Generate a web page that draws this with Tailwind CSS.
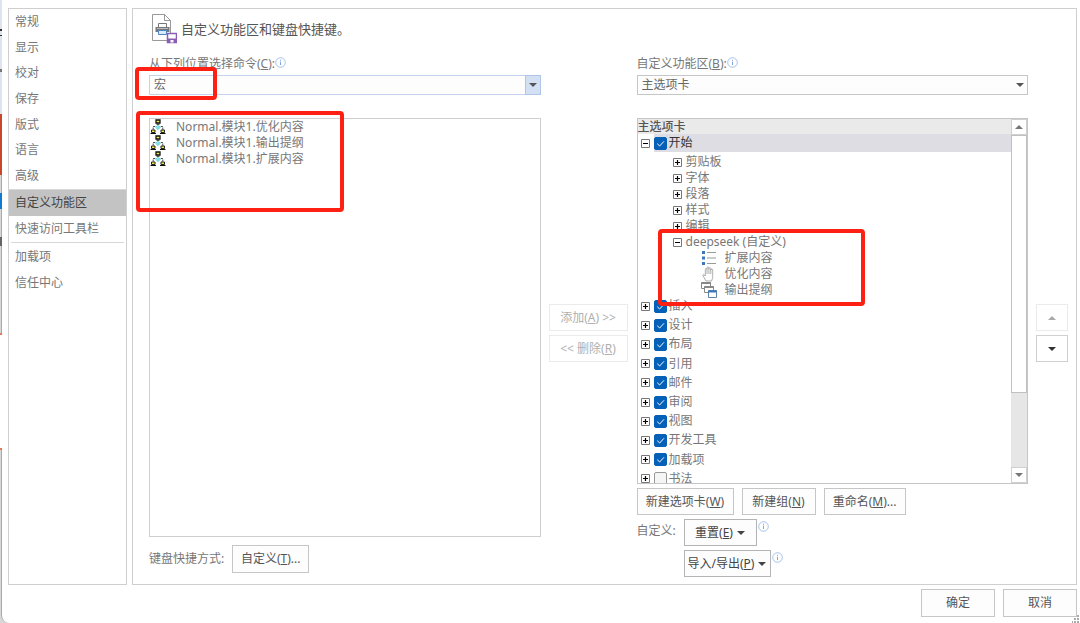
<!DOCTYPE html>
<html lang="zh-CN">
  <head>
    <meta charset="UTF-8" />
    <meta name="viewport" content="width=device-width, initial-scale=1.0" />
    <title>Word 选项</title>
    <script src="https://cdn.jsdelivr.net/npm/@tailwindcss/browser@4"></script>
  </head>
  <body class="relative h-screen overflow-hidden bg-[#d8d8d8] font-['Noto_Sans','Noto_Sans_CJK_SC',sans-serif] text-[12px] leading-4 text-[#777]">
    <!-- Edge of the window behind the dialog -->
    <svg class="absolute left-0 top-0 h-[623px] w-[2px]" viewBox="0 0 2 623" aria-hidden="true">
      <rect width="2" height="114" fill="#dfe3ee" />
      <rect y="29" width="2" height="2" fill="#333" />
      <rect y="35" width="2" height="1" fill="#333" />
      <rect y="69" width="2" height="3" fill="#777" />
      <rect y="114" width="2" height="61" fill="#c8472b" />
      <rect y="193" width="2" height="16" fill="#0f7ad1" />
      <rect y="237" width="2" height="9" fill="#666" />
      <rect y="335" width="2" height="114" fill="#fff" />
      <rect y="333" width="2" height="2" fill="#e8775a" />
      <rect y="448" width="2" height="2" fill="#e8775a" />
    </svg>

    <!-- Symbols shared by the tree and the lists -->
    <svg class="hidden">
      <symbol id="plus" viewBox="0 0 9 9">
        <path d="M.5.5h8v8h-8z" fill="#fff" stroke="#777" />
        <path d="M2 4.5h5M4.5 2v5" stroke="#000" stroke-width="1.2" />
      </symbol>
      <symbol id="minus" viewBox="0 0 9 9">
        <path d="M.5.5h8v8h-8z" fill="#fff" stroke="#777" />
        <path d="M2 4.5h5" stroke="#000" />
      </symbol>
      <symbol id="info" viewBox="0 0 11 11">
        <circle cx="5.5" cy="5.5" r="4.8" fill="#fff" stroke="#9dbbe6" stroke-width=".9" />
        <path d="M5.5 4.7v3.4M5.5 2.7v1.1" stroke="#7fa5dd" />
      </symbol>
      <symbol id="down" viewBox="0 0 8 4"><path d="M0 0h8L4 4z" fill="currentColor" /></symbol>
      <symbol id="up" viewBox="0 0 8 4"><path d="M0 4h8L4 0z" fill="currentColor" /></symbol>
      <symbol id="check" viewBox="0 0 12 12"><path d="M3 6.2l2.2 2.1L9.2 4" fill="none" stroke="#fff" stroke-width=".9" /></symbol>
      <symbol id="macro" viewBox="0 0 16 16">
        <path d="M5.200 7.500h-2v3M10.800 7.500h2v3" fill="none" stroke="#444" stroke-dasharray="2 1" />
        <path d="M6 1h4v3H6z" fill="#f0ea50" stroke="#111" stroke-width="1.300" />
        <path d="M6.500 5.200h3" stroke="#111" />
        <path d="M8 5.900l2.400 2.400L8 10.700 5.600 8.300z" fill="#7fe6ec" stroke="#4aa9b2" stroke-width=".5" />
        <path d="M1.500 11h3.500v2.500H1.500zM11 11h3.500v2.500H11z" fill="#f0ea50" stroke="#222" />
        <path d="M.500 14.500h5.500M10 14.500h5.500" stroke="#111" stroke-width="1.200" />
      </symbol>
    </svg>

    <div class="ml-px flex h-full flex-col rounded-bl-lg border-l border-[#aaa] bg-white pl-1.5 pr-[3px] pt-2">
      <div class="flex min-h-0 flex-1 gap-[5px]">
        <nav class="w-[119px] shrink-0 border border-[#cfcfcf]">
          <ul class="grid h-[181px] auto-rows-fr border-b border-[#d8d8d8]">
            <li class="flex items-center pl-1.5"><a href="#">常规</a></li>
            <li class="flex items-center pl-1.5"><a href="#">显示</a></li>
            <li class="flex items-center pl-1.5"><a href="#">校对</a></li>
            <li class="flex items-center pl-1.5"><a href="#">保存</a></li>
            <li class="flex items-center pl-1.5"><a href="#">版式</a></li>
            <li class="flex items-center pl-1.5"><a href="#">语言</a></li>
            <li class="flex items-center pl-1.5"><a href="#">高级</a></li>
          </ul>
          <ul>
            <li class="flex h-[26px] items-center bg-[#c3c3c3] pl-1.5 text-[#444]"><a href="#" aria-current="page">自定义功能区</a></li>
            <li class="flex h-[26px] items-center pl-1.5"><a href="#">快速访问工具栏</a></li>
          </ul>
          <ul class="mx-0.5 border-t border-[#d8d8d8] pt-px">
            <li class="flex h-[26px] items-center pl-1"><a href="#">加载项</a></li>
            <li class="flex h-[26px] items-center pl-1"><a href="#">信任中心</a></li>
          </ul>
        </nav>

        <main class="flex min-w-0 flex-1 flex-col border border-[#cfcfcf] pb-[7px] pl-4 pr-2 pt-[5px]">
          <header class="flex h-[30px] items-center gap-1">
            <svg class="h-[30px] w-7" viewBox="0 0 28 30" aria-hidden="true">
              <path d="M3.500.500h12l6 6v20h-18z" fill="#fff" stroke="#999" />
              <path d="M15.500.500v6h6" fill="none" stroke="#999" />
              <path d="M9.500 9.500h8v4h-8z" fill="#fff" stroke="#777" />
              <path d="M6.500 13h14v5h-14z" fill="#777" />
              <path d="M8 14.500h11" stroke="#bbb" />
              <path d="M9.500 16.500h8v4h-8z" fill="#dcebfa" stroke="#4a87c4" />
              <path d="M18.500 19.500h9v9h-9z" fill="#fff" stroke="#8a5cb3" stroke-width="1.500" />
              <path d="M19 24.500h8V29h-8z" fill="#8a5cb3" />
              <path d="M21.500 26h3v2.500h-3z" fill="#fff" />
            </svg>
            <h1 class="text-[13px] text-[#555]">自定义功能区和键盘快捷键。</h1>
          </header>

          <div class="mt-[11px] flex min-h-0 flex-1 gap-2">
            <!-- Commands -->
            <section class="flex min-w-0 flex-1 flex-col pb-1">
              <div class="flex h-5 items-start">
                <label for="source" class="pt-px">从下列位置选择命令(<u>C</u>):</label>
                <svg class="mt-0.5 size-[11px]"><use href="#info" /></svg>
              </div>
              <div class="relative">
                <select id="source" class="block h-5 w-full appearance-none border border-[#c3d3ec] bg-[#fdfdfd] pl-1 text-[#666]">
                  <option>宏</option>
                </select>
                <span class="pointer-events-none absolute inset-y-0 right-0 flex w-4 items-center justify-center border border-[#b0c6e6] bg-[#d3e0f3] text-[#555]">
                  <svg class="h-1 w-2"><use href="#down" /></svg>
                </span>
                <span class="pointer-events-none absolute -left-3.5 -top-2 z-10 h-[33px] w-[82px] rounded border-4 border-[#ff2014]"></span>
              </div>
              <div class="relative mt-[23px] min-h-0 flex-1 border border-[#cfcfcf]">
                <ul role="listbox" aria-label="命令">
                  <li role="option" class="flex h-4 items-center gap-2.5"><svg class="size-4"><use href="#macro" /></svg>Normal.模块1.优化内容</li>
                  <li role="option" class="flex h-4 items-center gap-2.5"><svg class="size-4"><use href="#macro" /></svg>Normal.模块1.输出提纲</li>
                  <li role="option" class="flex h-4 items-center gap-2.5"><svg class="size-4"><use href="#macro" /></svg>Normal.模块1.扩展内容</li>
                </ul>
                <span class="pointer-events-none absolute -left-3.5 -top-2 z-10 h-[101px] w-[208px] rounded border-4 border-[#ff2014]"></span>
              </div>
              <div class="mt-2 flex items-center gap-2">
                <span>键盘快捷方式:</span>
                <button class="h-7 w-[77px] border border-[#c6c6c6] bg-[#fdfdfd] text-[#555]">自定义(<u>T</u>)...</button>
              </div>
            </section>

            <div class="flex w-20 shrink-0 flex-col gap-1 pt-[249px]">
              <button disabled class="mr-px h-[27px] border border-[#ebebeb] text-[#b0b0b0]">添加(<u>A</u>) &gt;&gt;</button>
              <button disabled class="mr-px h-[27px] border border-[#ebebeb] text-[#b0b0b0]">&lt;&lt; 删除(<u>R</u>)</button>
            </div>

            <!-- Ribbon tabs -->
            <section class="flex min-w-0 flex-1 flex-col">
              <div class="flex h-5 items-start">
                <label for="ribbon" class="pt-px">自定义功能区(<u>B</u>):</label>
                <svg class="mt-0.5 size-[11px]"><use href="#info" /></svg>
              </div>
              <div class="relative">
                <select id="ribbon" class="block h-5 w-full appearance-none border border-[#c6c6c6] bg-[#fdfdfd] pl-1 text-[#666]">
                  <option>主选项卡</option>
                </select>
                <svg class="pointer-events-none absolute right-1 top-2 h-1 w-2 text-[#555]"><use href="#down" /></svg>
              </div>

              <div class="relative mt-[23px] flex min-h-0 flex-1 overflow-hidden border border-[#c6c6c6]">
                <div class="min-w-0 flex-1">
                  <h2 class="h-[15px] bg-[#eaeaea] font-medium text-[#555]">主选项卡</h2>
                  <div class="flex h-[18px] items-center">
                    <button class="ml-[3px]" aria-label="折叠"><svg class="size-[9px]"><use href="#minus" /></svg></button>
                    <label class="ml-1 flex h-full flex-1 items-center gap-0.5 bg-[#dedde3] text-[#333]">
                      <span class="relative size-[13px]">
                        <input type="checkbox" checked class="block size-[13px] appearance-none rounded-xs border border-[#999] bg-[#f5f5f5] checked:border-[#0560b8] checked:bg-[#0560b8]" />
                        <svg class="pointer-events-none absolute inset-0 size-[13px]"><use href="#check" /></svg>
                      </span>
                      开始
                    </label>
                  </div>
                  <ul class="pl-[35px] pt-0.5">
                    <li class="flex h-4 items-center gap-1"><button aria-label="展开"><svg class="size-[9px]"><use href="#plus" /></svg></button>剪贴板</li>
                    <li class="flex h-4 items-center gap-1"><button aria-label="展开"><svg class="size-[9px]"><use href="#plus" /></svg></button>字体</li>
                    <li class="flex h-4 items-center gap-1"><button aria-label="展开"><svg class="size-[9px]"><use href="#plus" /></svg></button>段落</li>
                    <li class="flex h-4 items-center gap-1"><button aria-label="展开"><svg class="size-[9px]"><use href="#plus" /></svg></button>样式</li>
                    <li class="flex h-4 items-center gap-1"><button aria-label="展开"><svg class="size-[9px]"><use href="#plus" /></svg></button>编辑</li>
                    <li>
                      <div class="flex h-4 items-center gap-1"><button aria-label="折叠"><svg class="size-[9px]"><use href="#minus" /></svg></button>deepseek (自定义)</div>
                      <ul class="pl-7">
                        <li class="flex h-4 items-center gap-2">
                          <svg class="size-4" viewBox="0 0 16 16">
                            <path d="M1 1h3v3H1zM1 6.500h3v3H1zM1 12h3v3H1z" fill="#3b78bd" />
                            <path d="M6 2.500h9M6 8h9M6 13.500h9" stroke="#999" />
                          </svg>
                          扩展内容
                        </li>
                        <li class="flex h-4 items-center gap-2">
                          <svg class="size-4" viewBox="0 0 16 16" fill="#fff" stroke="#999" stroke-width=".8">
                            <path d="M5 15c-1-2-2.500-4-3.300-6 .5-.9 1.500-.4 2.600 1V3.500c0-1.300 1.700-1.300 1.700 0V2c0-1.300 1.900-1.300 1.900 0v.7c0-1.300 1.900-1.300 1.900 0V4c0-1.200 1.900-1.200 1.900 0v6.500c0 2-.7 3-1.200 4.500z" />
                            <path d="M6 3.500V8M7.900 2.500V8M9.800 3.500V8" />
                          </svg>
                          优化内容
                        </li>
                        <li class="flex h-4 items-center gap-2">
                          <svg class="size-4" viewBox="0 0 16 16" fill="#fff" stroke="#888">
                            <path d="M.500.500h9v6h-9z" />
                            <path d="M.500 1h9" stroke-width="2" />
                            <path d="M3.500 4.500h9v6h-9z" />
                            <path d="M3.500 5h9" stroke-width="2" />
                            <path d="M7.500 8.500h8v7h-8z" stroke="#5a82ad" />
                            <path d="M7.500 9.500h8" stroke="#3b78bd" stroke-width="2" />
                          </svg>
                          输出提纲
                        </li>
                      </ul>
                    </li>
                  </ul>
                  <ul id="tabs" class="grid h-[192px] auto-rows-fr"></ul>
                </div>
                <!-- Scroll bar -->
                <div class="flex w-4 shrink-0 flex-col bg-[#e6e6e6]">
                  <button class="flex h-4 items-center justify-center border border-[#d0d0d0] bg-white text-[#777]" aria-label="向上滚动"><svg class="h-1 w-2"><use href="#up" /></svg></button>
                  <div class="h-[258px] border border-[#c0c0c0] bg-white"></div>
                  <button class="mt-auto flex h-4 items-center justify-center border border-[#d0d0d0] bg-white text-[#777]" aria-label="向下滚动"><svg class="h-1 w-2"><use href="#down" /></svg></button>
                </div>
                <span class="pointer-events-none absolute left-5 top-[110px] z-10 h-[77px] w-[207px] rounded border-4 border-[#ff2014]"></span>
              </div>

              <div class="mt-1 flex gap-2">
                <button class="h-[27px] w-[97px] border border-[#c6c6c6] bg-[#fdfdfd] text-[#555]">新建选项卡(<u>W</u>)</button>
                <button class="h-[27px] w-[74px] border border-[#c6c6c6] bg-[#fdfdfd] text-[#555]">新建组(<u>N</u>)</button>
                <button class="h-[27px] w-[82px] border border-[#c6c6c6] bg-[#fdfdfd] text-[#555]">重命名(<u>M</u>)...</button>
              </div>
              <div class="mt-1 flex">
                <span class="w-[47px] pt-1">自定义:</span>
                <div class="flex flex-col gap-1">
                  <div class="flex">
                    <button class="flex h-[27px] w-[73px] items-center justify-center gap-1 border border-[#b4b4b4] bg-[#fdfdfd] text-[#444]"><span>重置(<u>E</u>)</span><svg class="h-1 w-2"><use href="#down" /></svg></button>
                    <svg class="ml-px mt-0.5 size-[11px]"><use href="#info" /></svg>
                  </div>
                  <div class="flex">
                    <button class="flex h-[27px] w-[87px] items-center justify-center gap-1 whitespace-nowrap border border-[#b4b4b4] bg-[#fdfdfd] text-[#444]"><span>导入/导出(<u>P</u>)</span><svg class="h-1 w-2"><use href="#down" /></svg></button>
                    <svg class="ml-px mt-0.5 size-[11px]"><use href="#info" /></svg>
                  </div>
                </div>
              </div>
            </section>

            <div class="flex w-8 shrink-0 flex-col gap-1 pt-[249px]">
              <button disabled class="flex h-[27px] items-center justify-center border border-[#ebebeb] text-[#aaa]" aria-label="上移"><svg class="h-1 w-2"><use href="#up" /></svg></button>
              <button class="flex h-[27px] items-center justify-center border border-[#d0d0d0] text-[#333]" aria-label="下移"><svg class="h-1 w-2"><use href="#down" /></svg></button>
            </div>
          </div>
        </main>
      </div>

      <footer class="flex justify-end gap-2 pb-1.5 pt-1">
        <button class="h-7 w-[74px] border border-[#c6c6c6] bg-[#fdfdfd] text-[#555]">确定</button>
        <button class="h-7 w-[74px] border border-[#c6c6c6] bg-[#fdfdfd] text-[#555]">取消</button>
      </footer>
    </div>
    <svg class="absolute bottom-0 right-0 size-2" viewBox="0 0 8 8" fill="#aaa" aria-hidden="true">
      <path d="M5 0h2v2H5zM2 3h2v2H2zM5 3h2v2H5zM0 6h1v2H0zM2 6h2v2H2zM5 6h2v2H5z" />
    </svg>

    <script>
      const tabs = ["插入", "设计", "布局", "引用", "邮件", "审阅", "视图", "开发工具", "加载项", "书法"];
      document.getElementById("tabs").innerHTML = tabs
        .map((name) => {
          const on = name !== "书法";
          return `
            <li class="flex items-start">
              <label class="order-2 ml-1 flex h-4 items-center gap-0.5">
                <span class="relative size-[13px]">
                  <input type="checkbox" ${on ? "checked" : ""} class="block size-[13px] appearance-none rounded-xs border border-[#999] bg-[#f5f5f5] checked:border-[#0560b8] checked:bg-[#0560b8]" />
                  ${on ? '<svg class="pointer-events-none absolute inset-0 size-[13px]"><use href="#check" /></svg>' : ""}
                </span>
                ${name}
              </label>
              <button class="ml-[3px] flex h-4 items-center" aria-label="展开"><svg class="size-[9px]"><use href="#plus" /></svg></button>
            </li>`;
        })
        .join("");
    </script>
  </body>
</html>
